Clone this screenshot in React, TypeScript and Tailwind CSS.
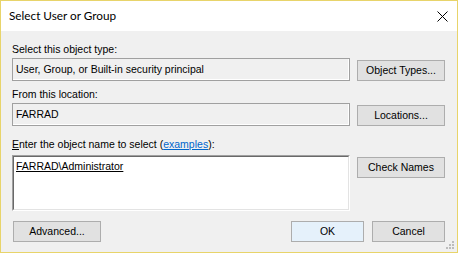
import React from "react";

const btn =
  "flex items-center justify-center h-[21px] bg-[#e1e1e1] border border-[#adadad] text-[10.5px] leading-[13px] text-black";

export default function App() {
  return (
    <div
      className="relative w-[458px] h-[253px] border border-[#e8d46a] flex flex-col bg-[#f0f0f0] text-black"
      style={{ fontFamily: '"Liberation Sans", Arial, sans-serif' }}
    >
      {/* Title bar */}
      <div className="h-[30px] bg-white flex items-center justify-between pl-[8px] pr-[9px]">
        <span
          className="text-[11.75px] leading-[16px]"
          style={{ fontFamily: 'Lato, "Noto Sans", sans-serif' }}
        >
          Select User or Group
        </span>
        <svg width="11" height="11" viewBox="0 0 11 11" className="mt-[1px]">
          <path d="M0.5 0.5 L10.5 10.5 M10.5 0.5 L0.5 10.5" stroke="#000" strokeWidth="1" />
        </svg>
      </div>

      {/* Client area */}
      <div className="flex-1 flex flex-col pt-[12px] pl-[11px] pr-[12px] text-[10.5px] leading-[13px]">
        <div className="h-[13px]">Select this object type:</div>
        <div className="mt-[2px] flex items-end gap-[7px]">
          <div className="w-[338px] h-[23px] border border-[#a0a0a0] shadow-[inset_-1px_-1px_0_#ffffff] flex items-center pl-[3px]">
            User, Group, or Built-in security principal
          </div>
          <div className={`${btn} w-[88px]`}>Object Types...</div>
        </div>

        <div className="mt-[7px] h-[13px]">From this location:</div>
        <div className="mt-[2px] flex items-end gap-[7px]">
          <div className="w-[338px] h-[23px] border border-[#a0a0a0] shadow-[inset_-1px_-1px_0_#ffffff] flex items-center pl-[3px]">
            FARRAD
          </div>
          <div className={`${btn} w-[88px]`}>Locations...</div>
        </div>

        <div className="mt-[12px] h-[13px]">
          <span className="underline">E</span>nter the object name to select (
          <span className="text-[#0066cc] underline">examples</span>):
        </div>
        <div className="mt-[4px] flex items-start gap-[7px]">
          <div className="w-[338px] h-[56px] border border-t-[#a0a0a0] border-l-[#a0a0a0] border-b-white border-r-white">
            <div className="h-full border border-t-[#696969] border-l-[#696969] border-b-[#e3e3e3] border-r-[#e3e3e3] bg-white pl-[2px] pt-[3px]">
              <span className="underline">FARRAD\Administrator</span>
            </div>
          </div>
          <div className={`${btn} w-[88px] mt-[2px]`}>Check Names</div>
        </div>

        <div className="mt-[10px] flex items-center">
          <div className={`${btn} w-[88px] ml-[1px]`}>Advanced...</div>
          <div className="ml-auto flex gap-[8px]">
            <div className={`${btn} w-[73px] bg-[#e5f1fb] border-[#0078d7]`}>OK</div>
            <div className={`${btn} w-[73px]`}>Cancel</div>
          </div>
        </div>
      </div>

      {/* Size grip */}
      <svg width="10" height="10" viewBox="0 0 10 10" className="absolute right-[2px] bottom-[2px]">
        <g fill="#bcbcbc">
          <rect x="7" y="1" width="2" height="2" />
          <rect x="4" y="4" width="2" height="2" />
          <rect x="7" y="4" width="2" height="2" />
          <rect x="1" y="7" width="2" height="2" />
          <rect x="4" y="7" width="2" height="2" />
          <rect x="7" y="7" width="2" height="2" />
        </g>
      </svg>
    </div>
  );
}
